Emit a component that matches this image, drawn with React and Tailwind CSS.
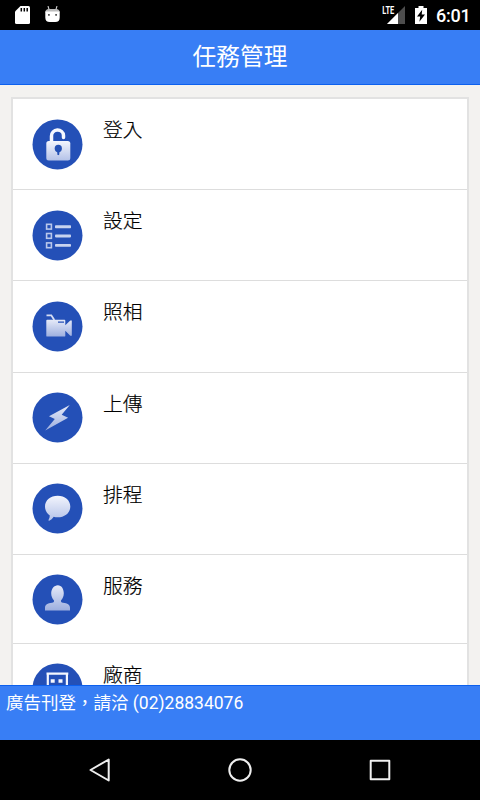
import React from "react";

const LockIcon = () => (
  <>
    <path d="M19 22.5V16.500a6 5.600 0 0 1 12-.4v2.100" stroke="#f6f8ff" strokeWidth="3.500" strokeLinecap="round" fill="none" />
    <rect x="13.8" y="21.6" width="24" height="19.6" rx="2.5" fill="url(#shine)" />
    <circle cx="25.8" cy="29" r="3.6" fill="#2450b5" />
    <path d="M24.300 30h3l-.6 4.800-.9 1-.9-1z" fill="#2450b5" />
  </>
);

const ListIcon = () => (
  <>
    {[13.5, 22.7, 32.1].map((y) => (
      <g key={y}>
        <rect x="14.1" y={y + 0.4} width="4.8" height="4.8" fill="none" stroke="#b9c7eb" strokeWidth="1.6" />
        <rect x="22.5" y={y + 1.4} width="16" height="2.9" rx="0.8" fill="#c8d3ef" />
      </g>
    ))}
  </>
);

const CameraIcon = () => (
  <>
    <path d="M14 13.900h4.800l3 4.800" stroke="#d5ddf3" strokeWidth="1.800" fill="none" />
    <path
      fillRule="evenodd"
      d="M14.600 18.300H32q.8 0 .8 1v4.600l5-4.900h1.500v15.300h-1.500l-5-4.900v4.900q0 .9-.8.9H14.600q-.8 0-.8-.9V19.300q0-1 .8-1zM25.500 20.200v1.200h6v-1.200z"
      fill="url(#shineDeep)"
    />
  </>
);

const BoltIcon = () => (
  <path d="M37.300 12.700 16.500 23.800l5.800 2.700L12.700 38l22.900-12.700-6.400-2.900z" fill="url(#shineDeep)" />
);

const BubbleIcon = () => (
  <path
    d="M25.200 12.300c7.200 0 12.600 4.400 12.600 10.800s-5.400 10.800-12.600 10.800c-1.600 0-2.800-.1-4-.5-1.200 1.900-2.800 3.300-4.500 3.900-.7.100-1-.4-.6-1 .8-1.200 1.200-2.700 1.200-4.300-3-2-4.800-5.200-4.800-8.900 0-6.400 5.500-10.800 12.700-10.800z"
    fill="url(#shine)"
  />
);

const PersonIcon = () => (
  <path
    d="M25.300 10.800c3.600 0 6 3.600 6 8 0 3.300-1.200 5.300-2.700 7-.4 1.400.2 2.200 1.900 2.500 4.500.6 7 2 7 5V36h-25v-2.700c0-3 2.500-4.400 7-5 1.700-.3 2.300-1.100 1.900-2.500-1.500-1.700-2.700-3.700-2.700-7 0-4.400 3-8 6.600-8z"
    fill="url(#shineDeep)"
  />
);

const BuildingIcon = () => (
  <>
    <path d="M14 10.200h21.800M15.300 10v28M34.400 10v28" stroke="#f4f7ff" strokeWidth="2.200" fill="none" />
    <path d="M18.200 15.800h4v3.600h-4zM26 15.800h4v3.600h-4zM18.200 23h4v3.600h-4zM26 23h4v3.600h-4z" fill="#f4f7ff" />
  </>
);

const menuItems = [
  { id: "login", label: "登入", icon: LockIcon },
  { id: "settings", label: "設定", icon: ListIcon },
  { id: "camera", label: "照相", icon: CameraIcon },
  { id: "upload", label: "上傳", icon: BoltIcon },
  { id: "schedule", label: "排程", icon: BubbleIcon },
  { id: "service", label: "服務", icon: PersonIcon, height: "h-[89px]" },
  { id: "vendor", label: "廠商", icon: BuildingIcon },
];

const StatusBar = () => (
  <div className="h-[30px] shrink-0 bg-black flex items-center justify-between text-white">
    <div className="flex items-center pl-[15px] gap-[15px]">
      <svg width="15" height="18" viewBox="0 0 15 18">
        <path d="M5.500 0H13.500Q15 0 15 1.500V16.500Q15 18 13.500 18H1.500Q0 18 0 16.500V5.500z" fill="#fff" />
        <path d="M6.300 2v3.500M9.300 2v3.500M12.200 2v3.500" stroke="#000" strokeWidth="1.500" />
      </svg>
      <svg width="15" height="18" viewBox="0 0 15 18">
        <path d="M3 0l1.200 4M12 0l-1.200 4" stroke="#ccc" strokeWidth="1.100" />
        <path d="M.3 6.500q0-3.500 3.500-3.500h7.400q3.500 0 3.500 3.500z" fill="#bbb" />
        <path d="M.3 5.500h14.400v6q0 4.500-4.500 4.500H4.800q-4.500 0-4.500-4.500z" fill="#fff" />
        <path d="M3 8h1.800v1.800H3zM10.200 8H12v1.800h-1.800z" fill="#555" />
      </svg>
    </div>
    <div className="flex items-center pr-[10px]">
      <svg width="23" height="20" viewBox="0 0 23 20" className="font-[Roboto,sans-serif]">
        <path d="M23 1v18H5z" fill="#4d4d4d" />
        <path d="M16 8v11H5z" fill="#fff" />
        <path d="M0 0h13v10H0z" fill="#000" />
        <text x="0.3" y="9" fontSize="10" fontWeight="700" textLength="12" lengthAdjust="spacingAndGlyphs" fill="#fff">
          LTE
        </text>
      </svg>
      <svg width="12" height="18" viewBox="0 0 12 18" className="ml-[10px]">
        <path d="M3.500 0h5v2H12v16H0V2h3.500z" fill="#fff" />
        <path d="M7.200 3.800 2 10.500h3.200L4.400 15.800 10 8.600H6.700z" fill="#000" />
      </svg>
      <span className="ml-[9px] w-[34px] whitespace-nowrap font-[Roboto,sans-serif] font-medium text-[18px] leading-[30px] pt-[2px] tracking-[-0.2px]">
        6:01
      </span>
    </div>
  </div>
);

const MenuRow = ({ item }) => {
  const Icon = item.icon;

  return (
    <li className={`${item.height || "h-[91.2px]"} shrink-0 flex border-b border-[#dddddd] pl-[19px] pt-[19.5px]`}>
      <svg width="51" height="51" viewBox="-0.5 -0.4 51 51" className="shrink-0">
        <circle cx="25" cy="25" r="25" fill="#2450b7" />
        <Icon />
      </svg>
      <span className="ml-5 mt-[0.5px] text-[19.8px] font-light leading-6 text-black [-webkit-text-stroke:0.2px_#000]">
        {item.label}
      </span>
    </li>
  );
};

export default function App() {
  return (
    <div className="w-[480px] h-[800px] flex flex-col overflow-hidden bg-[#f3f2f0] font-[Roboto,'Noto_Sans_CJK_TC',sans-serif]">
      {/* gradients shared by the menu icons */}
      <svg width="0" height="0" className="absolute">
        <defs>
          <linearGradient id="shine" x1="0" y1="0" x2="0" y2="1">
            <stop offset="0" stopColor="#f3f5fd" />
            <stop offset="1" stopColor="#b4c2e8" />
          </linearGradient>
          <linearGradient id="shineDeep" x1="0" y1="0" x2="0" y2="1">
            <stop offset="0" stopColor="#e6eaf8" />
            <stop offset="1" stopColor="#9dafdf" />
          </linearGradient>
        </defs>
      </svg>

      <StatusBar />

      <header className="h-[55px] shrink-0 bg-[#387ef5] border-b border-[#0c60ee] flex items-center justify-center">
        <h1 className="text-[23.7px] leading-8 text-white">任務管理</h1>
      </header>

      <main className="flex-1 min-h-0 overflow-hidden px-[11px] pt-3">
        <ul className="flex flex-col border-2 border-b-0 border-[#e2e2e2] bg-white">
          {menuItems.map((item) => (
            <MenuRow key={item.id} item={item} />
          ))}
        </ul>
      </main>

      <footer className="h-[55px] shrink-0 bg-[#387ef5] border-t border-[#0c60ee] pl-[6px] pt-[4px]">
        <p className="text-[17.5px] leading-[26px] text-white">廣告刊登，請洽 (02)28834076</p>
      </footer>

      <nav className="h-[60px] shrink-0 bg-black flex items-center justify-around px-[30px]">
        <svg width="24" height="26" viewBox="0 0 24 26" fill="none" stroke="#eee" strokeWidth="2" strokeLinejoin="round">
          <path d="M20.700 2.500v21L2.500 13z" />
        </svg>
        <svg width="24" height="24" viewBox="0 0 24 24" fill="none" stroke="#eee" strokeWidth="2">
          <circle cx="12" cy="12" r="10.7" />
        </svg>
        <svg width="24" height="24" viewBox="0 0 24 24" fill="none" stroke="#eee" strokeWidth="2" strokeLinejoin="round">
          <rect x="2.7" y="2.7" width="18.6" height="18.6" />
        </svg>
      </nav>
    </div>
  );
}
